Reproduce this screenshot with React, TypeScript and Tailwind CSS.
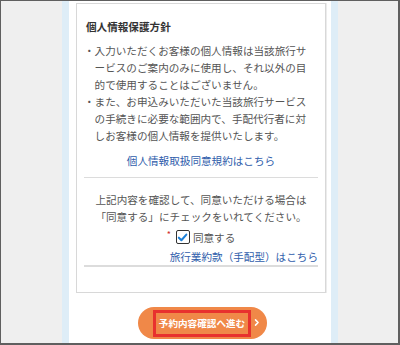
export default function App() {
  return (
    <div className="w-[400px] h-[345px] overflow-hidden border-t border-l border-r-2 border-b-2 border-[#5f5f5f] bg-[#efefef] flex font-[family-name:'Noto_Sans_CJK_JP','Noto_Sans',sans-serif]">
      <div className="ml-[61px] w-[276px] h-full border-x-[7px] border-[#deedf7] bg-white flex flex-col">
        {/* policy card */}
        <div className="ml-[7px] mt-[2px] w-[250px] border border-[#d8d8d8] shadow-[1px_0_0_#ececec] px-[7px] pt-[14px] pb-[25px]">
          <div className="text-[10.6px] leading-[17px] font-bold text-[#333] mb-[7px] pl-[2px]">
            個人情報保護方針
          </div>
          <div className="text-[10.6px] leading-[17px] text-[#555] whitespace-nowrap">
            <div className="pl-[1em] -indent-[1em]">
              ・入力いただくお客様の個人情報は当該旅行サ<br />
              ービスのご案内のみに使用し、それ以外の目<br />
              的で使用することはございません。
            </div>
            <div className="pl-[1em] -indent-[1em]">
              ・また、お申込みいただいた当該旅行サービス<br />
              の手続きに必要な範囲内で、手配代行者に対<br />
              しお客様の個人情報を提供いたします。
            </div>
          </div>
          <div className="mt-[8px] text-center text-[10.6px] leading-[17px] text-[#2f5dab]">
            個人情報取扱同意規約はこちら
          </div>
          <div className="mt-[8px] h-px bg-[#dcdcdc]" />
          <div className="mt-[13px] text-center text-[10.6px] leading-[17px] text-[#555] whitespace-nowrap">
            上記内容を確認して、同意いただける場合は<br />
            「同意する」にチェックをいれてください。
          </div>
          <div className="mt-[2px] h-[20px] flex items-center justify-center text-[10.6px] text-[#555]">
            <span className="self-start mt-[3px] mr-[5px] text-[9px] leading-[10px] text-[#d02b2b]">*</span>
            <span className="w-[14px] h-[14px] border-[1.5px] border-[#333] rounded-[2px] bg-white flex items-center justify-center mr-[3px]">
              <svg viewBox="0 0 12 12" className="w-[11px] h-[11px]">
                <path d="M2 6.2 L4.8 9 L10.2 2.8" fill="none" stroke="#1d80d8" strokeWidth="2.2" strokeLinecap="round" strokeLinejoin="round" />
              </svg>
            </span>
            <span className="leading-[17px]">同意する</span>
          </div>
          <div className="mt-[1px] flex justify-end text-[10.6px] leading-[17px] text-[#2f5dab]">
            旅行業約款（手配型）はこちら
          </div>
          <div className="h-[2px] bg-[#dcdcdc]" />
        </div>

        {/* next button */}
        <div className="mt-[14px] flex justify-center">
          <div className="relative ml-[4px] w-[129px] h-[32px] rounded-full bg-[#f08848] flex items-center justify-center">
            <span className="border-[3px] border-[#e8312e] px-[3px] h-[27px] flex items-center text-[9.6px] font-bold text-white whitespace-nowrap">
              予約内容確認へ進む
            </span>
            <svg viewBox="0 0 8 10" className="absolute right-[7px] top-[11px] w-[6px] h-[9px]">
              <path d="M2 1.5 L5.5 5 L2 8.5" fill="none" stroke="#ffffff" strokeWidth="2" strokeLinecap="round" strokeLinejoin="round" />
            </svg>
          </div>
        </div>
      </div>
    </div>
  );
}
